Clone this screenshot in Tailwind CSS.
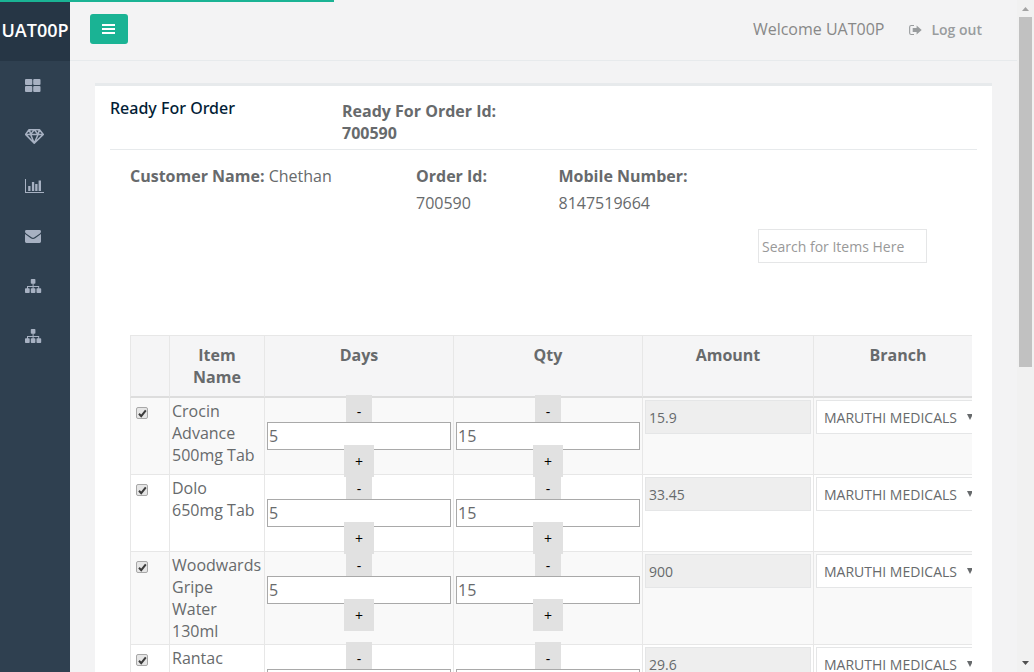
<!DOCTYPE html>
<html lang="en">
<head>
<meta charset="utf-8">
<title>Ready For Order</title>
<script src="https://cdn.jsdelivr.net/npm/@tailwindcss/browser@4"></script>
</head>
<body class="relative flex h-[672px] w-[1034px] overflow-hidden bg-[#f3f3f4] font-['Open_Sans','Noto_Sans',sans-serif] text-[16px] leading-[22px] text-[#676a6c]">
<div class="absolute left-0 top-0 z-10 h-[2px] w-[334px] bg-[#1ab394]"></div>

<nav class="flex w-[70px] shrink-0 flex-col bg-[#2f4050] text-[#a7b1c2]">
  <div class="flex h-[61px] items-center justify-center bg-[#263645] pb-[2px] text-[18px] font-semibold text-white whitespace-nowrap">UAT00P</div>
  <a class="flex h-[50px] items-center pb-[2px] pl-[25px]"><svg width="16" height="13" viewBox="0 0 16 13" fill="currentColor"><rect width="7.3" height="6" rx="1"/><rect x="8.2" width="7.3" height="6" rx="1"/><rect y="7" width="7.3" height="6" rx="1"/><rect x="8.2" y="7" width="7.3" height="6" rx="1"/></svg></a>
  <a class="flex h-[50px] items-center pl-[25px]"><svg width="19" height="15" viewBox="0 0 19 15" fill="none" stroke="currentColor" stroke-width="1.5" stroke-linejoin="round"><path d="M4 .8h10.5l3.8 4.6L9.25 14.2.6 5.4zM.6 5.4h17.7M5.6 5.4l3.65 8.8 3.9-8.8M4.5.8l1.1 4.6L9.25.8l3.9 4.6L14.3.8"/></svg></a>
  <a class="flex h-[50px] items-center pl-[25px]"><svg width="19" height="14" viewBox="0 0 19 14" fill="currentColor"><path d="M0 0h1v13h18v1H0zM3.2 7h2.3v5H3.2zM6.9 3h2.3v9H6.9zM10.2 5h2.3v7h-2.3zM13.6 1.5h2.4V12h-2.4z"/></svg></a>
  <a class="flex h-[50px] items-center pl-[25px] pt-px"><svg width="16" height="13" viewBox="0 0 16 13" fill="currentColor"><path d="M1.4 0h13.2Q16 0 16 1.4 16 2.7 14.6 3.7L9.5 7.3Q8 8.4 6.5 7.3L1.4 3.7Q0 2.7 0 1.4 0 0 1.4 0zM0 4l5.8 4.2q2.2 1.6 4.4 0L16 4v7.6q0 1.4-1.4 1.4H1.4Q0 13 0 11.6z"/></svg></a>
  <a class="flex h-[50px] items-center pl-[25px]"><svg width="17" height="14" viewBox="0 0 17 14" fill="currentColor"><rect x="5.8" width="4.6" height="4.7" rx=".8"/><path d="M7.6 4h1v3h5.6v3h-1V8H8.6v2h-1V8H3v2H2V7h5.6z"/><rect y="9.3" width="4.7" height="4.7" rx=".8"/><rect x="5.8" y="9.3" width="4.6" height="4.7" rx=".8"/><rect x="11.5" y="9.3" width="4.7" height="4.7" rx=".8"/></svg></a>
  <a class="flex h-[50px] items-center pl-[25px]"><svg width="17" height="14" viewBox="0 0 17 14" fill="currentColor"><rect x="5.8" width="4.6" height="4.7" rx=".8"/><path d="M7.6 4h1v3h5.6v3h-1V8H8.6v2h-1V8H3v2H2V7h5.6z"/><rect y="9.3" width="4.7" height="4.7" rx=".8"/><rect x="5.8" y="9.3" width="4.6" height="4.7" rx=".8"/><rect x="11.5" y="9.3" width="4.7" height="4.7" rx=".8"/></svg></a>
</nav>

<div class="flex w-[947px] shrink-0 flex-col">
  <header class="flex h-[61px] shrink-0 items-start justify-between border-b border-[#e7eaec] pl-5 pr-[35px]">
    <button class="mt-[14px] flex h-[30px] w-[38px] items-center justify-center rounded-[3px] bg-[#1ab394]"><svg class="-mt-px mr-px" width="13" height="10" viewBox="0 0 13 10" fill="#fff"><path d="M0 0h13v2H0zM0 4h13v2H0zM0 8h13v2H0z"/></svg></button>
    <div class="mt-[18px] flex h-[22px] items-center whitespace-nowrap">
      <span class="text-[#888888]">Welcome UAT00P</span>
      <svg class="ml-[25px] mr-[9px] mt-[2px]" width="13" height="10" viewBox="0 0 13 10" fill="#999c9e"><path d="M5 0v1H2.2Q1.2 1 1.2 2v6q0 1 1 1H5v1H2.2Q.1 10 .1 8V2Q.1 0 2.2 0zM3.7 3H7.6V.6L12.7 5 7.6 9.4V7H3.7z"/></svg>
      <span class="mt-[2px] text-[14px] font-semibold text-[#999c9e]">Log out</span>
    </div>
  </header>

  <main class="ml-[25px] mt-[22px] flex h-[600px] w-[897px] flex-col border-t-[3px] border-[#e7eaec] bg-white px-[15px]">
    <div class="flex h-[64px] shrink-0 border-b border-[#e7eaec]">
      <h5 class="w-[232px] pt-[11px] font-['Noto_Sans'] font-medium text-[#021d36]">Ready For Order</h5>
      <div class="w-[180px] pt-[14px] font-bold">Ready For Order Id:<br>700590</div>
    </div>
    <div class="flex pl-5 pt-[15px]">
      <div class="w-[286px]"><b class="font-bold">Customer Name:</b> Chethan</div>
      <div class="w-[142.5px]"><b class="font-bold">Order Id:</b><p class="mt-[5px]">700590</p></div>
      <div><b class="font-bold">Mobile Number:</b><p class="mt-[5px]">8147519664</p></div>
    </div>
    <input placeholder="Search for Items Here" class="ml-[648px] mt-[15px] h-[34px] w-[169px] shrink-0 border border-[#e5e6e7] bg-white px-[3px] text-[14px] placeholder:text-[#999]">

    <div class="ml-5 mt-[72px] flex w-[842px] flex-col overflow-hidden">
      <div class="flex h-[63px] w-[990px] shrink-0 border-t border-[#e7e7e7] bg-[#f5f5f6] text-center font-bold">
        <div class="w-[39px] border-b-2 border-l border-b-[#dddddd] border-l-[#e7e7e7]"></div>
        <div class="w-[95px] border-b-2 border-l border-b-[#dddddd] border-l-[#e7e7e7] px-4 pt-2">Item Name</div>
        <div class="w-[189px] border-b-2 border-l border-b-[#dddddd] border-l-[#e7e7e7] pt-2">Days</div>
        <div class="w-[189px] border-b-2 border-l border-b-[#dddddd] border-l-[#e7e7e7] pt-2">Qty</div>
        <div class="w-[171px] border-b-2 border-l border-b-[#dddddd] border-l-[#e7e7e7] pt-2">Amount</div>
        <div class="w-[169px] border-b-2 border-l border-b-[#dddddd] border-l-[#e7e7e7] pt-2">Branch</div>
        <div class="w-[138px] border-b-2 border-b-[#dddddd]"></div>
      </div>
      <div id="rows" class="flex flex-col"></div>
    </div>
  </main>
</div>

<aside class="flex w-[17px] shrink-0 flex-col items-center bg-[#f1f1f1]">
  <svg class="mt-[7px] shrink-0" width="7" height="4" viewBox="0 0 7 4"><path d="M3.5 0L7 4H0z" fill="#a3a3a3"/></svg>
  <div class="mt-[6px] h-[350px] w-[13px] bg-[#c1c1c1]"></div>
  <svg class="mt-[294px] shrink-0" width="7" height="4" viewBox="0 0 7 4"><path d="M0 0h7L3.5 4z" fill="#505050"/></svg>
</aside>

<script>
const items = [
  ['Crocin Advance 500mg Tab', '15.9', 77, true],
  ['Dolo<br>650mg Tab', '33.45', 77, false],
  ['Woodwards Gripe Water 130ml', '900', 93, true],
  ['Rantac', '29.6', 77, false]
];
const stepper = v => `
  <div class="flex w-[189px] flex-col items-center border-l border-[#e7e7e7]">
    <button class="-mb-[5px] -mt-[3px] h-8 w-[26px] shrink-0 bg-[#e1e1e1] pt-[2px] text-[14px] text-black">-</button>
    <div class="z-[1] flex h-7 w-[184px] shrink-0 items-center border border-[#a9a9a9] bg-white px-px">${v}</div>
    <button class="z-[2] -mt-[5px] h-8 w-[30px] shrink-0 bg-[#e1e1e1] pt-[2px] text-[14px] text-black">+</button>
  </div>`;
document.getElementById('rows').innerHTML = items.map(([name, amount, h, odd]) => `
<div class="flex w-[990px] shrink-0 border-b border-[#e7e7e7] ${odd ? 'bg-[#f9f9f9]' : 'bg-white'}" style="height:${h}px">
  <div class="w-[39px] border-l border-[#e7e7e7] pl-[5px] pt-[9px]">
    <div class="flex h-3 w-3 items-center justify-center rounded-[2px] border border-[#a8a8a8] bg-[#e6e6e6]"><svg width="9" height="9" viewBox="0 0 9 9"><path d="M1 4.8l2.2 2.4L7.8 1.4" fill="none" stroke="#3c3c3c" stroke-width="2"/></svg></div>
  </div>
  <div class="w-[95px] border-l border-[#e7e7e7] pl-[2px] pr-[2px] pt-[2px]">${name}</div>
  ${stepper('5')}${stepper('15')}
  <div class="w-[171px] border-l border-[#e7e7e7] pl-[2px] pt-[2px]">
    <div class="flex h-[34px] w-[166px] items-center border border-[#e5e6e7] bg-[#eeeeee] px-[3px] pt-[2px] text-[14px]">${amount}</div>
  </div>
  <div class="w-[307px] border-l border-[#e7e7e7] pl-[2px] pt-[2px]">
    <div class="flex h-[34px] w-[166px] items-center border border-[#e5e6e7] bg-white pl-[7px] pt-[2px] text-[14px] whitespace-nowrap">MARUTHI MEDICALS<svg class="-mt-[3px] ml-[10px]" width="6" height="6" viewBox="0 0 6 6"><path d="M0 0h6L3 6z" fill="#676a6c"/></svg></div>
  </div>
</div>`).join('');
</script>
</body>
</html>
